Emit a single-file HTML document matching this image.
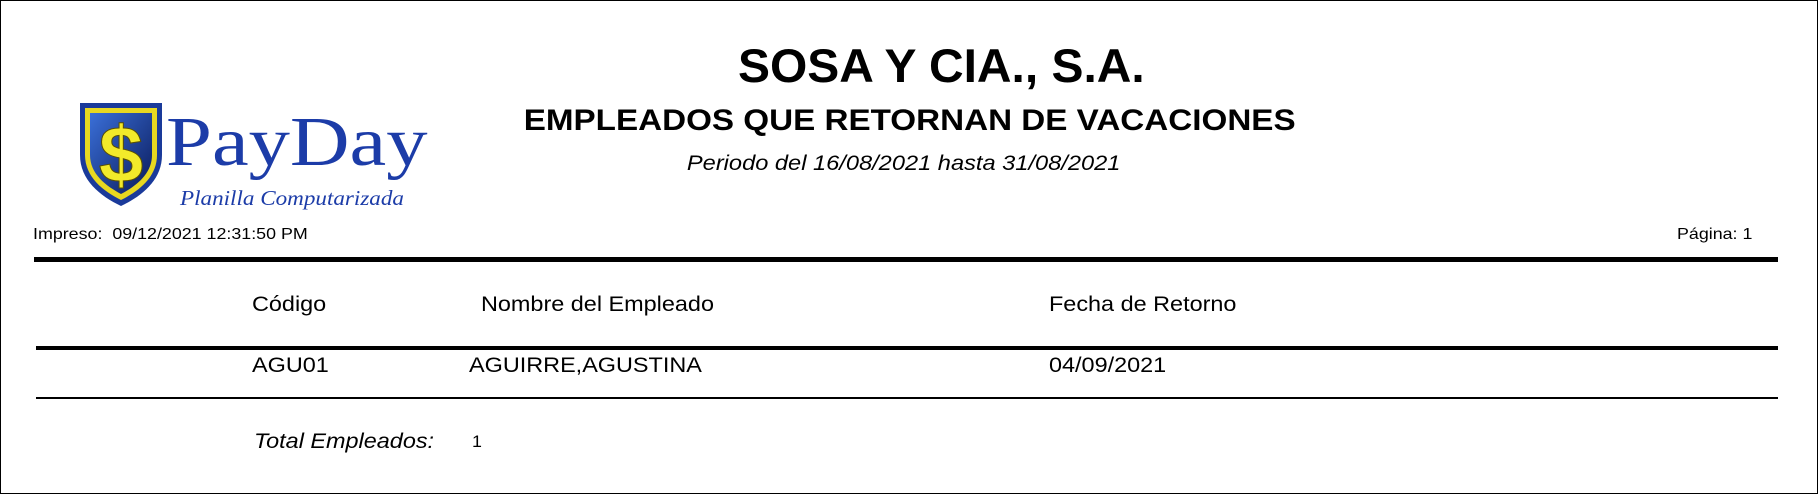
<!DOCTYPE html>
<html><head><meta charset="utf-8">
<style>
html,body{margin:0;padding:0;background:#fff}
body{width:1818px;height:494px;position:relative;overflow:hidden;font-family:"Liberation Sans",Arial,sans-serif;color:#000}
.frame{position:absolute;left:0;top:0;width:1816px;height:492px;border:1px solid #000}
.a{position:absolute;white-space:nowrap;transform-origin:0 0;transform:scaleX(1.115)}
.c{position:absolute;white-space:nowrap;text-align:center}
.c span{display:inline-block;transform:scaleX(1.115)}
.line{position:absolute;background:#000}
</style></head><body>
<div class="frame"></div>

<svg style="position:absolute;left:76px;top:100px" width="90" height="108" viewBox="0 0 90 108">
  <defs>
    <linearGradient id="g" x1="0" y1="0" x2="1" y2="1">
      <stop offset="0" stop-color="#3a6fd8"/><stop offset="1" stop-color="#0a1a5a"/>
    </linearGradient>
  </defs>
  <path d="M4 3 H86 V55 C86 80 66 96 45 106 C24 96 4 80 4 55 Z" fill="#1a3a9a"/>
  <path d="M9 8 H81 V55 C81 77 63 91 45 100 C27 91 9 77 9 55 Z" fill="#e8d820"/>
  <path d="M14 13 H76 V55 C76 74 60 86 45 94 C30 86 14 74 14 55 Z" fill="url(#g)"/>
  <text x="45" y="82" text-anchor="middle" font-family="Liberation Sans,sans-serif" font-weight="bold" font-size="80" fill="#f2ea2a" stroke="#5a5000" stroke-width="1">$</text>
</svg>
<div class="a" style="left:166px;top:103px;font-family:'Liberation Serif',serif;font-size:70px;color:#1c3ca8;line-height:80px;transform:scaleX(1.18)">PayDay</div>
<div class="a" style="left:180px;top:186px;font-family:'Liberation Serif',serif;font-style:italic;font-size:21px;color:#1c3ca8;line-height:24px;transform:scaleX(1.1)">Planilla Computarizada</div>

<div class="c" style="left:0;width:1882px;top:38px;font-size:47px;font-weight:bold;line-height:56px"><span style="transform:scaleX(1.02)">SOSA Y CIA., S.A.</span></div>
<div class="c" style="left:0;width:1820px;top:103px;font-size:30px;font-weight:bold;line-height:36px"><span style="transform:scaleX(1.107)">EMPLEADOS QUE RETORNAN DE VACACIONES</span></div>
<div class="c" style="left:0;width:1808px;top:151px;font-size:21px;font-style:italic;line-height:26px"><span style="transform:scaleX(1.125)">Periodo del 16/08/2021 hasta 31/08/2021</span></div>

<div class="a" style="left:33px;top:226px;font-size:16px;line-height:18px">Impreso:&nbsp; 09/12/2021 12:31:50 PM</div>
<div class="a" style="left:1677px;top:226px;font-size:16px;line-height:18px">Página: 1</div>

<div class="line" style="left:34px;width:1744px;top:257px;height:5px"></div>

<div class="a" style="left:252px;top:293px;font-size:21px;line-height:24px">Código</div>
<div class="a" style="left:481px;top:293px;font-size:21px;line-height:24px">Nombre del Empleado</div>
<div class="a" style="left:1049px;top:293px;font-size:21px;line-height:24px">Fecha de Retorno</div>

<div class="line" style="left:36px;width:1742px;top:346px;height:4px"></div>

<div class="a" style="left:252px;top:354px;font-size:21px;line-height:24px">AGU01</div>
<div class="a" style="left:469px;top:354px;font-size:21px;line-height:24px">AGUIRRE,AGUSTINA</div>
<div class="a" style="left:1049px;top:354px;font-size:21px;line-height:24px">04/09/2021</div>

<div class="line" style="left:36px;width:1742px;top:397px;height:2px"></div>

<div class="a" style="left:254px;top:430px;font-size:21px;font-style:italic;line-height:24px">Total Empleados:</div>
<div class="a" style="left:472px;top:432px;font-size:17px;line-height:20px;transform:scaleX(1.05)">1</div>
</body></html>
